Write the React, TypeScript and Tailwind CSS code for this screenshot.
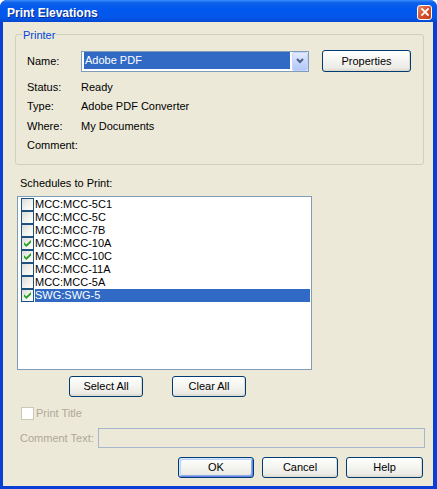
import type { ReactNode } from 'react'

const schedules = [
  { name: 'MCC:MCC-5C1', checked: false },
  { name: 'MCC:MCC-5C', checked: false },
  { name: 'MCC:MCC-7B', checked: false },
  { name: 'MCC:MCC-10A', checked: true },
  { name: 'MCC:MCC-10C', checked: true },
  { name: 'MCC:MCC-11A', checked: false },
  { name: 'MCC:MCC-5A', checked: false },
  { name: 'SWG:SWG-5', checked: true, selected: true },
]

function XpCheck({ checked, disabled }: { checked?: boolean; disabled?: boolean }) {
  return (
    <span
      className={`flex h-[13px] w-[13px] shrink-0 items-center justify-center border ${
        disabled
          ? 'border-[#cac8bb] bg-white'
          : 'border-[#1c5180] bg-[linear-gradient(135deg,#dcdcd7_0%,#f4f4f1_60%,#ffffff_100%)]'
      }`}
    >
      {checked && (
        <svg width="7" height="7" viewBox="0 0 7 7">
          <polygon points="0,2.2 2.3,4.5 7,0 7,2.4 2.3,7 0,4.6" fill="#21a121" />
        </svg>
      )}
    </span>
  )
}

function XpButton({
  children,
  className = '',
  isDefault = false,
}: {
  children: ReactNode
  className?: string
  isDefault?: boolean
}) {
  return (
    <button
      type="button"
      className={`flex items-center justify-center rounded-[3px] border border-[#003c74] bg-[linear-gradient(to_bottom,#ffffff_0%,#f5f5f1_45%,#ecebe5_85%,#d9d5ca_100%)] text-[11px] leading-none text-black ${
        isDefault
          ? 'shadow-[inset_1px_1px_0_#cee7ff,inset_-1px_-1px_0_#6982ee,inset_2px_2px_0_#bcd4f6,inset_-2px_-2px_0_#89ade4]'
          : 'shadow-[inset_-1px_-1px_0_#e0dbd0]'
      } ${className}`}
    >
      {children}
    </button>
  )
}

export default function App() {
  return (
    <div className="h-[489px] w-[437px] bg-white font-['Liberation_Sans',Arial,sans-serif] text-[11px] text-black">
      <div className="flex h-full flex-col rounded-t-[7px] bg-[#0a3fd6]">
        {/* タイトルバー */}
        <div className="flex h-[22px] shrink-0 items-center rounded-t-[7px] bg-[linear-gradient(to_bottom,#3d8ffc_0%,#0e62ea_12%,#0058ee_40%,#0557ea_80%,#0348d0_100%)] pl-[7px] pr-[5px] pt-[3px]">
          <span className="flex-1 text-[12px] font-bold leading-[14px] text-white [text-shadow:1px_1px_0_#0b2a8f]">
            Print Elevations
          </span>
          <span className="mb-[1px] flex h-[15px] w-[15px] items-center justify-center rounded-[3px] border border-white bg-[linear-gradient(135deg,#e98a68_0%,#d9552f_45%,#c23d17_100%)]">
            <svg width="8" height="8" viewBox="0 0 8 8">
              <path d="M1 1 L7 7 M7 1 L1 7" stroke="white" strokeWidth="1.8" strokeLinecap="square" />
            </svg>
          </span>
        </div>

        {/* 本体 */}
        <div className="mb-[3px] ml-[3px] mr-[4px] flex flex-1 flex-col bg-[#ece9d8]">
          {/* Printer グループ */}
          <div className="relative ml-[12px] mt-[12px] h-[131px] w-[409px] rounded-[3px] border border-[#d0d0bf]">
            <span className="absolute left-[6px] top-[-6px] bg-[#ece9d8] px-[1px] leading-[13px] text-[#0046d5]">
              Printer
            </span>
            <div className="flex h-[22px] items-center pl-[11px] mt-[15px]">
              <span className="w-[54px]">Name:</span>
              <div className="flex h-[21px] w-[228px] border border-[#7f9db9] bg-white">
                <div className="my-[0px] ml-[2px] mb-[2px] flex flex-1 items-center bg-[#316ac5] pl-[1px] leading-[13px] text-white">
                  Adobe PDF
                </div>
                <div className="ml-[2px] flex w-[16px] items-center justify-center rounded-[2px] border border-[#c3d3fd] bg-[linear-gradient(to_bottom,#e3ebfe_0%,#c8d7fb_50%,#b4c8f7_100%)]">
                  <svg width="8" height="6" viewBox="0 0 8 6">
                    <path d="M1 1 L4 4 L7 1" stroke="#4d6185" strokeWidth="2" fill="none" />
                  </svg>
                </div>
              </div>
              <XpButton className="ml-[13px] h-[22px] w-[89px]">Properties</XpButton>
            </div>
            <div className="mt-[5px] pl-[11px]">
              {[
                ['Status:', 'Ready'],
                ['Type:', 'Adobe PDF Converter'],
                ['Where:', 'My Documents'],
                ['Comment:', ''],
              ].map(([label, value]) => (
                <div key={label} className="flex h-[19.5px] items-center">
                  <span className="w-[54px]">{label}</span>
                  <span>{value}</span>
                </div>
              ))}
            </div>
          </div>

          {/* Schedules */}
          <div className="ml-[17px] mt-[12px] leading-[13px]">Schedules to Print:</div>
          <div className="ml-[14px] mt-[6px] h-[174px] w-[295px] border border-[#7f9db9] bg-white pl-[3px] pr-[1px] pt-[1px]">
            {schedules.map((s) => (
              <div key={s.name} className="flex h-[13px] items-center">
                <XpCheck checked={s.checked} />
                <span
                  className={`ml-[1px] flex h-[13px] flex-1 items-center leading-[13px] ${
                    s.selected ? 'bg-[#316ac5] text-white' : ''
                  }`}
                >
                  {s.name}
                </span>
              </div>
            ))}
          </div>

          <div className="ml-[66px] mt-[6px] flex">
            <XpButton className="h-[21px] w-[74px]">Select All</XpButton>
            <XpButton className="ml-[29px] h-[21px] w-[74px]">Clear All</XpButton>
          </div>

          <div className="ml-[18px] mt-[10px] flex h-[13px] items-center text-[#aca899]">
            <XpCheck disabled />
            <span className="ml-[2px] leading-[13px]">Print Title</span>
          </div>

          <div className="ml-[17px] mt-[8px] flex h-[20px] items-center">
            <span className="w-[78px] text-[#aca899]">Comment Text:</span>
            <div className="h-[20px] w-[327px] border border-[#a5b6cd] bg-[#ece9d8]" />
          </div>

          <div className="ml-[175px] mt-[9px] flex">
            <XpButton isDefault className="h-[21px] w-[76px]">
              OK
            </XpButton>
            <XpButton className="ml-[8px] h-[21px] w-[76px]">Cancel</XpButton>
            <XpButton className="ml-[8px] h-[21px] w-[77px]">Help</XpButton>
          </div>
        </div>
      </div>
    </div>
  )
}
